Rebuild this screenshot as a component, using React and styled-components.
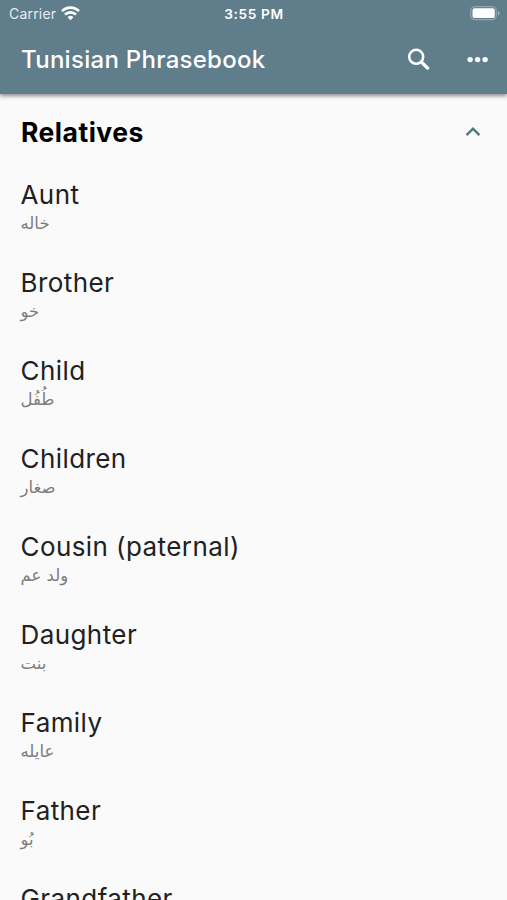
import React from "react";
import styled, { createGlobalStyle } from "styled-components";

const GlobalStyle = createGlobalStyle`
  * { box-sizing: border-box; }
  body {
    margin: 0;
    background: #fafafa;
    font-family: Inter, "Liberation Sans", sans-serif;
  }
`;

const Screen = styled.div`
  display: flex;
  flex-direction: column;
  height: 900px;
  overflow: hidden;
  background: #fafafa;
`;

const Header = styled.header`
  flex: none;
  height: 94px;
  background: #607d8b;
  color: #fff;
  box-shadow: 0 2px 4px rgba(0, 0, 0, 0.45);
  z-index: 1;
`;

const StatusBar = styled.div`
  display: grid;
  grid-template-columns: 1fr auto 1fr;
  align-items: center;
  height: 27px;
  padding: 0 7px 0 9px;
`;

const Carrier = styled.div`
  display: flex;
  align-items: center;
  gap: 5px;
  font-size: 14px;
  letter-spacing: 0.2px;
  color: #e6ecef;
`;

const Clock = styled.div`
  margin-right: 1px;
  font-size: 13.7px;
  font-weight: 600;
  letter-spacing: 0.6px;
`;

const BatteryIcon = styled.svg`
  justify-self: end;
`;

const Toolbar = styled.div`
  display: flex;
  align-items: center;
  height: 66px;
  padding: 0 16px 0 21px;
`;

const Title = styled.h1`
  flex: 1;
  margin: 0;
  font-size: 24px;
  line-height: 30px;
  font-weight: 500;
  letter-spacing: 0.28px;
`;

const Actions = styled.div`
  display: flex;
  align-items: center;
  gap: 31px;
`;

const IconButton = styled.button`
  display: flex;
  padding: 0;
  border: 0;
  background: none;
  color: inherit;
`;

const SectionHeader = styled.div`
  flex: none;
  display: flex;
  align-items: center;
  justify-content: space-between;
  height: 76px;
  padding: 0 26px 0 21px;
`;

const SectionTitle = styled.h2`
  margin: 0;
  font-size: 26.5px;
  font-weight: 700;
  line-height: 32px;
  letter-spacing: 0.5px;
  color: #000;
`;

const PhraseList = styled.ul`
  flex: 1;
  margin: 0;
  padding: 0;
  list-style: none;
`;

const PhraseItem = styled.li`
  height: 88px;
  padding: 9px 21px 0 20.5px;
`;

const Phrase = styled.div`
  font-size: 26px;
  line-height: 32px;
  letter-spacing: 0.42px;
  color: #212121;
`;

const Translation = styled.div`
  width: fit-content;
  height: 22px;
  margin-top: 2px;
  font-family: "DejaVu Sans", sans-serif;
  font-size: 16.5px;
  line-height: 22px;
  color: #7c7c7c;
`;

const phrases = [
  ["Aunt", "خاله"],
  ["Brother", "خو"],
  ["Child", "طُفُل"],
  ["Children", "صغار"],
  ["Cousin (paternal)", "ولد عم"],
  ["Daughter", "بنت"],
  ["Family", "عايله"],
  ["Father", "بُو"],
  ["Grandfather", "جد"],
];

export default function App() {
  return (
    <Screen>
      <GlobalStyle />
      <Header>
        <StatusBar>
          <Carrier>
            Carrier
            <svg width="19" height="15" viewBox="0 0 19 15" fill="none" stroke="#fff" strokeWidth="2.7">
              <path d="M1 5.1a12 12 0 0 1 17 0" />
              <path d="M4 8.6a7.8 7.8 0 0 1 11 0" />
              <path d="M9.5 14.2 6.6 11.2a4.2 4.2 0 0 1 5.8 0Z" fill="#fff" stroke="none" />
            </svg>
          </Carrier>
          <Clock>3:55 PM</Clock>
          <BatteryIcon width="30" height="15" viewBox="0 0 30 15">
            <rect x="0.7" y="0.7" width="25.6" height="13" rx="4" fill="none" stroke="#91a6b0" strokeWidth="1.2" />
            <rect x="2.5" y="2.3" width="22.3" height="9.8" rx="2.2" fill="#fff" />
            <path d="M28 5v4.5c2-.8 2-3.7 0-4.5Z" fill="#a6b6be" />
          </BatteryIcon>
        </StatusBar>
        <Toolbar>
          <Title>Tunisian Phrasebook</Title>
          <Actions>
            <IconButton aria-label="Search">
              <svg width="30" height="30" viewBox="0 0 30 30" fill="none" stroke="currentColor">
                <circle cx="12.2" cy="11.8" r="7" strokeWidth="2.5" />
                <path d="m17.4 17 7.2 7.2" strokeWidth="3.2" />
              </svg>
            </IconButton>
            <IconButton aria-label="More options">
              <svg width="26" height="30" viewBox="0 0 26 30" fill="currentColor">
                <circle cx="5.1" cy="14.6" r="2.7" />
                <circle cx="12.6" cy="14.6" r="2.7" />
                <circle cx="20.1" cy="14.6" r="2.7" />
              </svg>
            </IconButton>
          </Actions>
        </Toolbar>
      </Header>
      <SectionHeader>
        <SectionTitle>Relatives</SectionTitle>
        <svg width="16" height="12" viewBox="0 0 16 12" fill="none" stroke="#4f7b7b" strokeWidth="2.5">
          <path d="M1.6 9.1 8 2.7l6.4 6.4" />
        </svg>
      </SectionHeader>
      <PhraseList>
        {phrases.map(([phrase, translation]) => (
          <PhraseItem key={phrase}>
            <Phrase>{phrase}</Phrase>
            <Translation lang="ar" dir="rtl">{translation}</Translation>
          </PhraseItem>
        ))}
      </PhraseList>
    </Screen>
  );
}
